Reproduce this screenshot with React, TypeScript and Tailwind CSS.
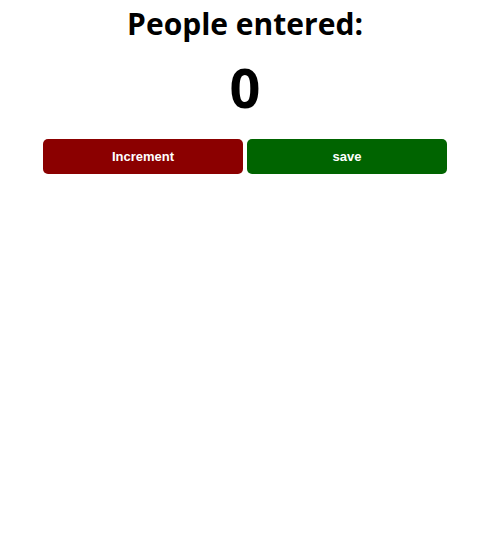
import React, { useState } from "react";

export default function App() {
  const [count, setCount] = useState(0);

  return (
    <div className="w-[490px] bg-white text-center">
      <h1 className="pt-[4px] text-[30px] leading-[40px] font-bold text-black font-['Open_Sans','Noto_Sans',sans-serif]">
        People entered:
      </h1>
      <div className="mt-[12px] text-[54px] leading-[62px] font-bold text-black font-['Open_Sans','Noto_Sans',sans-serif]">
        {count}
      </div>
      <div className="mt-[21px] flex justify-center gap-[4px]">
        <button
          className="w-[200px] h-[35px] rounded-[5px] bg-[#8b0000] text-white text-[13px] font-bold font-['Liberation_Sans',Arial,sans-serif]"
          onClick={() => setCount(count + 1)}
        >
          Increment
        </button>
        <button className="w-[200px] h-[35px] rounded-[5px] bg-[#006400] text-white text-[13px] font-bold font-['Liberation_Sans',Arial,sans-serif]">
          save
        </button>
      </div>
    </div>
  );
}
